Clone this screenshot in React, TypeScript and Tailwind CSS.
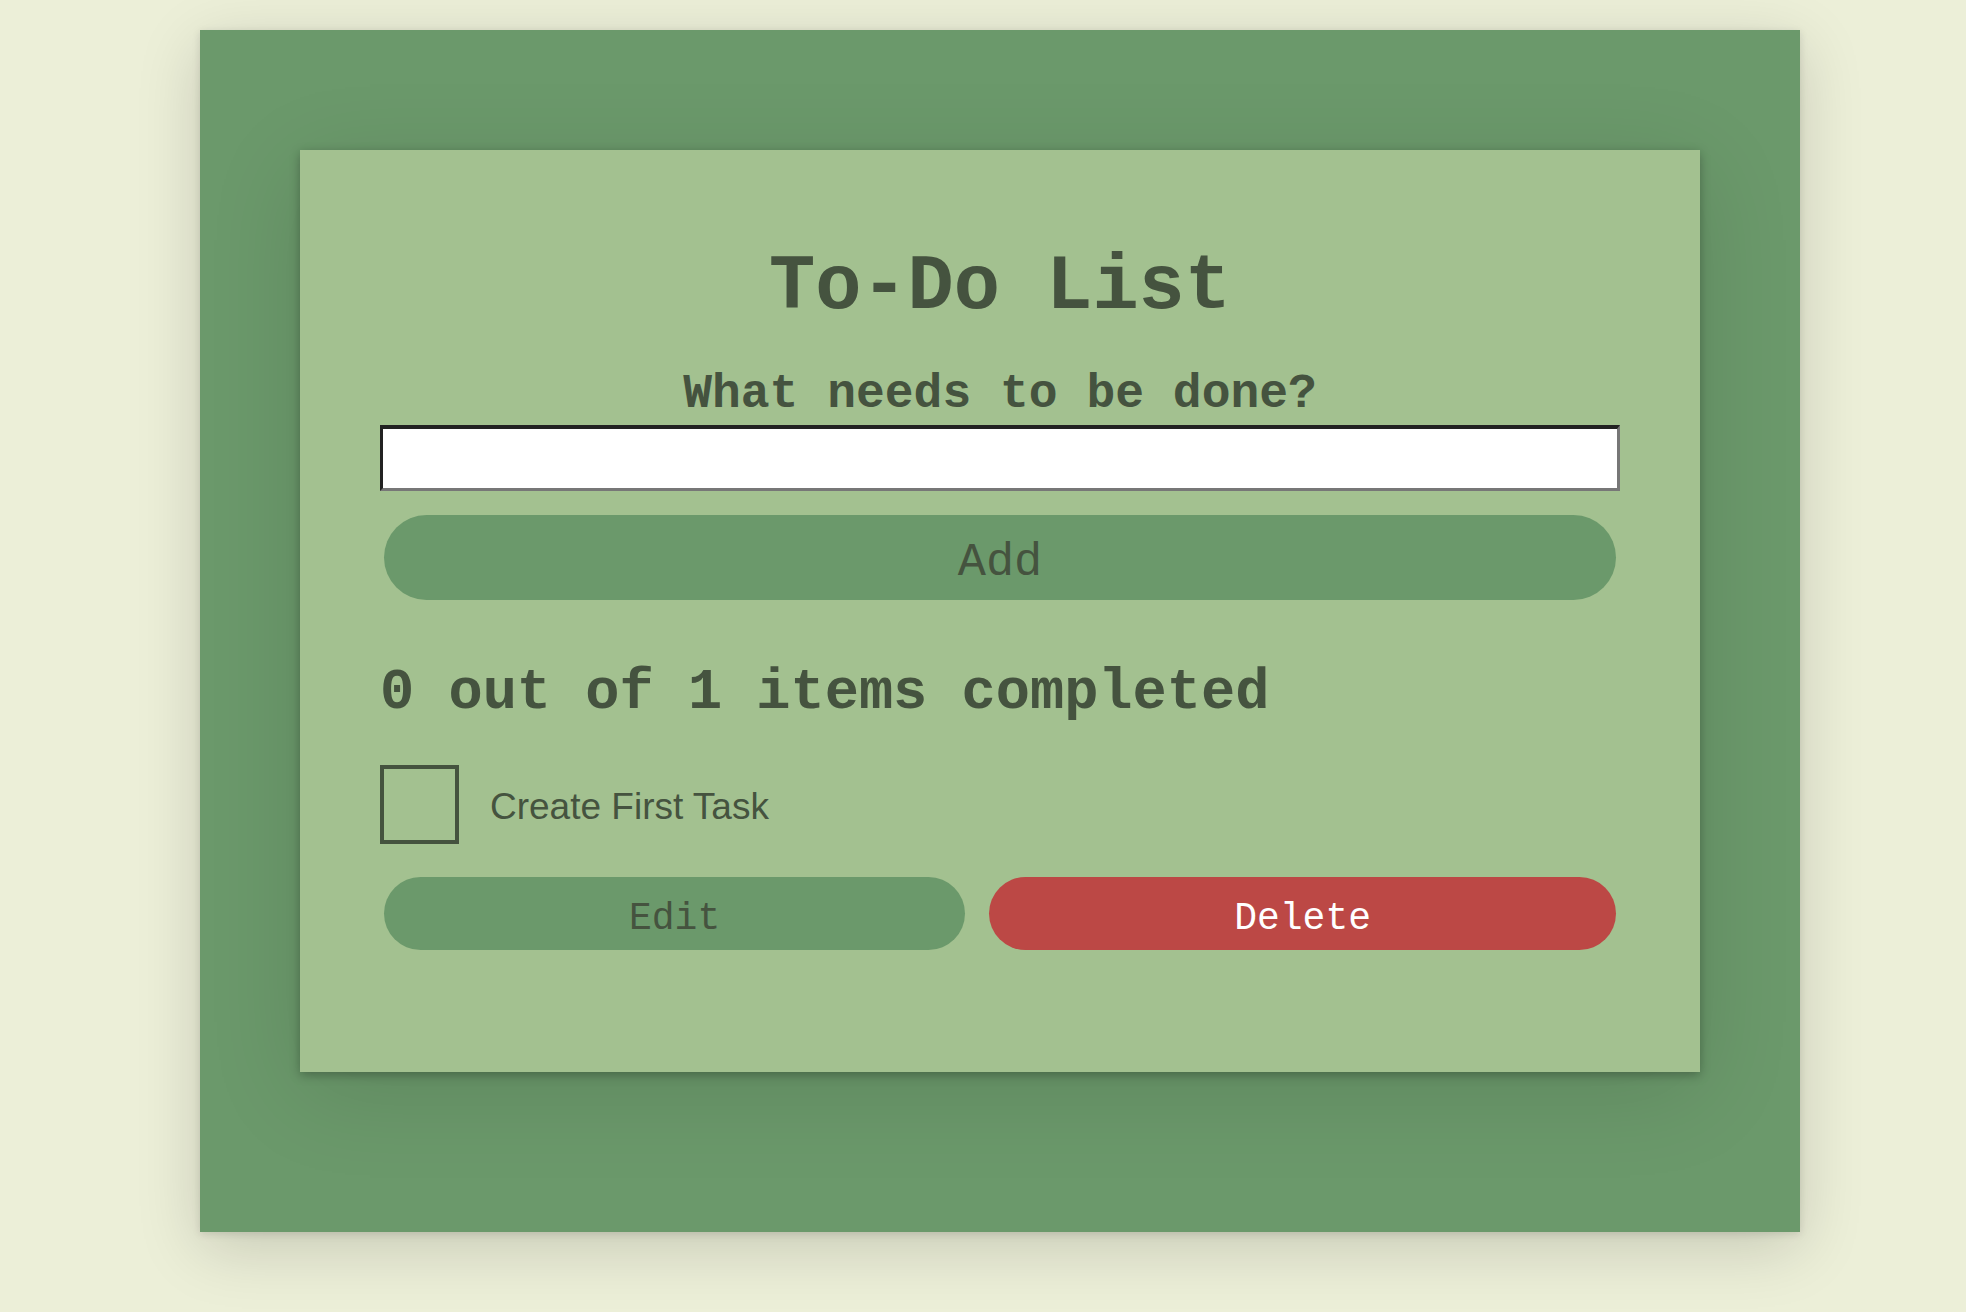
import {useState} from "react";

type Task = {
    id: number;
    title: string;
    done: boolean;
};

const mono = "font-['Liberation_Mono','Courier_New',monospace]";

function TaskRow({task, onToggle, onDelete}: { task: Task, onToggle: () => void, onDelete: () => void }) {
    return (
        <li>
            <label className="mt-[43px] flex items-center gap-[31px] cursor-pointer">
                <input
                    type="checkbox"
                    checked={task.done}
                    onChange={onToggle}
                    className="appearance-none w-[79px] h-[79px] border-[4px] border-[#45533f] bg-transparent checked:bg-[#6b996b]"
                />
                <span className="pt-[4px] font-['Liberation_Sans',Arial,sans-serif] text-[37px] text-[#45533f]">
                    {task.title}
                </span>
            </label>
            <div className={`mt-[33px] mx-[4px] flex gap-[24px] ${mono}`}>
                <button className="flex-auto h-[73px] pt-[10px] rounded-full bg-[#6b996b] text-[38px] text-[#45533f]">
                    Edit
                </button>
                <button
                    className="flex-auto h-[73px] pt-[10px] rounded-full bg-[#bc4845] text-[38px] text-white"
                    onClick={onDelete}
                >
                    Delete
                </button>
            </div>
        </li>
    );
}

export default function App() {
    const [tasks, setTasks] = useState<Task[]>([
        {id: 1, title: "Create First Task", done: false}
    ]);
    const [newTask, setNewTask] = useState("");

    function handleAdd() {
        if (!newTask.trim()) return;
        setTasks((prev) => prev.concat({id: Date.now(), title: newTask, done: false}));
        setNewTask("");
    }

    const completed = tasks.filter((t) => t.done).length;

    return (
        <div className="min-h-screen bg-[#ecefd8] pt-[30px] pl-[200px]">
            <div className="w-[1600px] bg-[#6b996b] pt-[120px] pb-[160px] px-[100px] shadow-[0_2px_8px_rgba(0,0,0,0.12),0_16px_60px_rgba(0,0,0,0.16)]">
                <div className="bg-[#a3c190] pt-[99px] pb-[122px] px-[80px] text-[#45533f] shadow-[0_3px_10px_rgba(0,0,0,0.28),0_20px_90px_rgba(0,0,0,0.12)]">
                    <h1 className={`text-center text-[77px] leading-[77px] font-bold ${mono}`}>
                        To-Do List
                    </h1>
                    <h2 className={`mt-[44px] text-center text-[48px] leading-[48px] font-bold ${mono}`}>
                        What needs to be done?
                    </h2>
                    <input
                        type="text"
                        value={newTask}
                        onChange={(e) => setNewTask(e.target.value)}
                        className="mt-[7px] block w-full h-[66px] bg-white border-[3px] border-t-[4px] border-t-[#222222] border-l-[#222222] border-b-[#777777] border-r-[#777777] px-3 text-[30px] outline-none"
                    />
                    <div className="mx-[4px] mt-[24px]">
                        <button
                            onClick={handleAdd}
                            className={`w-full h-[85px] pt-[12px] rounded-full bg-[#6b996b] text-[47px] text-[#45533f] ${mono}`}
                        >
                            Add
                        </button>
                    </div>
                    <h2 className={`mt-[65px] text-[57px] leading-[57px] font-bold ${mono}`}>
                        {completed} out of {tasks.length} items completed
                    </h2>
                    <ul>
                        {tasks.map((task) => (
                            <TaskRow
                                key={task.id}
                                task={task}
                                onToggle={() => setTasks((prev) => prev.map((t) => t.id === task.id ? {...t, done: !t.done} : t))}
                                onDelete={() => setTasks((prev) => prev.filter((t) => t.id !== task.id))}
                            />
                        ))}
                    </ul>
                </div>
            </div>
        </div>
    );
}
